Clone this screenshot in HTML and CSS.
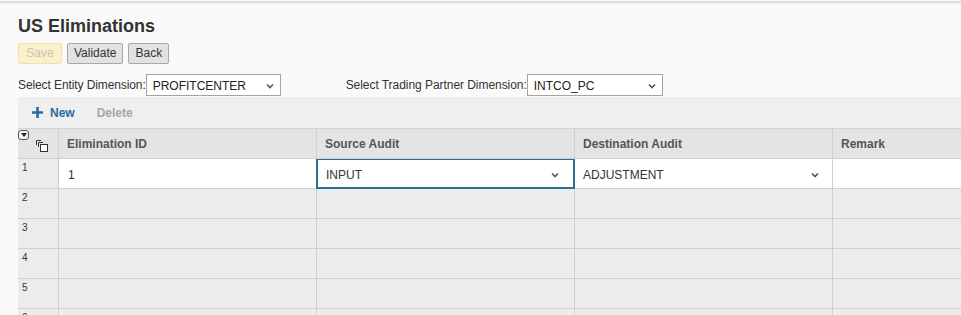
FILE: index.html
```html
<!DOCTYPE html>
<html>
<head>
<meta charset="utf-8">
<link rel="stylesheet" href="styles.css">
</head>
<body>
<div class="topbar"></div>
<div class="page">
  <h1 class="title">US Eliminations</h1>
  <div class="buttons">
    <button class="btn btn-save">Save</button>
    <button class="btn">Validate</button>
    <button class="btn">Back</button>
  </div>
  <div class="filters">
    <label class="flabel">Select Entity Dimension:</label>
    <div class="sel sel-entity"><span>PROFITCENTER</span><svg class="chev" width="8" height="6" viewBox="0 0 8 6"><path d="M1 1.5 L4 4.5 L7 1.5" fill="none" stroke="#555" stroke-width="1.6"/></svg></div>
    <label class="flabel flabel-2">Select Trading Partner Dimension:</label>
    <div class="sel sel-partner"><span>INTCO_PC</span><svg class="chev" width="8" height="6" viewBox="0 0 8 6"><path d="M1 1.5 L4 4.5 L7 1.5" fill="none" stroke="#555" stroke-width="1.6"/></svg></div>
  </div>
</div>
<div class="area">
  <div class="toolbar">
    <span class="tb-new"><svg class="plus" width="11" height="11" viewBox="0 0 11 11"><path d="M5.5 0 V11 M0 5.5 H11" stroke="#2b6aa3" stroke-width="2.6"/></svg>New</span>
    <span class="tb-del">Delete</span>
  </div>
  <div class="grid">
    <div class="hc corner">
      <span class="toggle"><svg width="8" height="6" viewBox="0 0 8 6"><path d="M1 1 H7 L4 5 Z" fill="#222"/></svg></span>
      <svg class="copy" width="12" height="12" viewBox="0 0 12 12"><path d="M0.5 5 V0.5 H5 M2.5 7 V2.5 H7" fill="none" stroke="#333" stroke-width="1"/><rect x="4.5" y="4.5" width="7" height="7" fill="#fff" stroke="#333" stroke-width="1"/></svg>
    </div>
    <div class="hc">Elimination ID</div>
    <div class="hc">Source Audit</div>
    <div class="hc">Destination Audit</div>
    <div class="hc">Remark</div>

    <div class="rn">1</div>
    <div class="dc white">1</div>
    <div class="dc white active"><span>INPUT</span><svg class="chev" width="8" height="6" viewBox="0 0 8 6"><path d="M1 1.5 L4 4.5 L7 1.5" fill="none" stroke="#555" stroke-width="1.6"/></svg></div>
    <div class="dc white dd"><span>ADJUSTMENT</span><svg class="chev" width="8" height="6" viewBox="0 0 8 6"><path d="M1 1.5 L4 4.5 L7 1.5" fill="none" stroke="#555" stroke-width="1.6"/></svg></div>
    <div class="dc white"></div>

    <div class="rn">2</div><div class="dc"></div><div class="dc"></div><div class="dc"></div><div class="dc"></div>
    <div class="rn">3</div><div class="dc"></div><div class="dc"></div><div class="dc"></div><div class="dc"></div>
    <div class="rn">4</div><div class="dc"></div><div class="dc"></div><div class="dc"></div><div class="dc"></div>
    <div class="rn">5</div><div class="dc"></div><div class="dc"></div><div class="dc"></div><div class="dc"></div>
    <div class="rn">6</div><div class="dc"></div><div class="dc"></div><div class="dc"></div><div class="dc"></div>
  </div>
</div>
</body>
</html>
```
FILE: styles.css
```css
html, body {
  margin: 0;
  padding: 0;
}
body {
  width: 961px;
  height: 315px;
  overflow: hidden;
  background: #fafafa;
  font-family: "Liberation Sans", Arial, sans-serif;
  font-size: 12px;
  color: #333;
}
.topbar {
  height: 2px;
  margin-top: 1px;
  background: #dde1e4;
  border-bottom: 1px solid #eef3f7;
}
.page {
  padding-left: 18px;
}
.title {
  margin: 11px 0 0 0;
  font-size: 18px;
  line-height: 22px;
  font-weight: bold;
  color: #333;
}
.buttons {
  display: flex;
  gap: 5px;
  margin-top: 6px;
}
.btn {
  height: 21px;
  padding: 0 6px;
  font-family: "Liberation Sans", Arial, sans-serif;
  font-size: 12px;
  color: #333;
  background: #e2e2e2;
  border: 1px solid #a8a8a8;
  border-radius: 2px;
  line-height: 19px;
}
.btn-save {
  width: 44px;
  background: #fcf0cc;
  border-color: #f1e1ae;
  color: #c9c4b4;
}
.filters {
  display: flex;
  align-items: center;
  margin-top: 10px;
  height: 22px;
}
.flabel {
  color: #333;
  letter-spacing: -0.1px;
}
.flabel-2 {
  margin-left: 65px;
  letter-spacing: -0.05px;
}
.sel {
  box-sizing: border-box;
  height: 22px;
  background: #fff;
  border: 1px solid #a3a3a3;
  display: flex;
  align-items: center;
  justify-content: space-between;
  padding: 2px 6px 0 6px;
  color: #222;
}
.sel-entity { width: 135px; }
.sel-partner { width: 136px; }
.chev { display: block; }
.sel .chev { margin-top: -1px; }
.area {
  margin-top: 1px;
  margin-left: 18px;
}
.toolbar {
  height: 31px;
  background: #efefef;
  display: flex;
  align-items: center;
  font-weight: bold;
}
.tb-new {
  display: flex;
  align-items: center;
  color: #2a6aa0;
  margin-left: 14px;
}
.plus {
  margin-right: 7px;
}
.tb-del {
  color: #a6a6a6;
  margin-left: 22px;
}
.grid {
  display: grid;
  grid-template-columns: 41px 258px 258px 258px 300px;
  grid-auto-rows: 30px;
  border-top: 1px solid #d2d2d2;
}
.hc, .rn, .dc {
  box-sizing: border-box;
  border-right: 1px solid #d0d0d0;
  border-bottom: 1px solid #d0d0d0;
}
.hc {
  background: #e4e4e4;
  font-weight: bold;
  color: #555;
  padding: 8px 0 0 8px;
}
.corner {
  padding: 0;
  position: relative;
}
.toggle {
  position: absolute;
  left: 0;
  top: 1px;
  width: 9px;
  height: 8px;
  border: 1px solid #555;
  border-radius: 3px;
  background: #f4f4f4;
  display: flex;
  align-items: center;
  justify-content: center;
}
.toggle svg { display: block; }
.copy {
  position: absolute;
  left: 18px;
  top: 11px;
}
.rn {
  background: #ececec;
  font-size: 10px;
  padding: 3px 0 0 4px;
  color: #333;
}
.dc {
  background: #ececec;
  padding: 9px 0 0 9px;
  color: #333;
}
.dc.white {
  background: #fff;
}
.dc.active {
  border: 2px solid #2f6e93;
  border-top: 1px solid #2f6e93;
  margin-left: -1px;
  padding: 8px 14px 0 8px;
  display: flex;
  justify-content: space-between;
  align-items: flex-start;
}
.dc.active .chev { margin-top: 4px; }
.dc.dd {
  display: flex;
  justify-content: space-between;
  align-items: flex-start;
  padding: 9px 13px 0 8px;
}
.dc.dd .chev { margin-top: 4px; }
```
